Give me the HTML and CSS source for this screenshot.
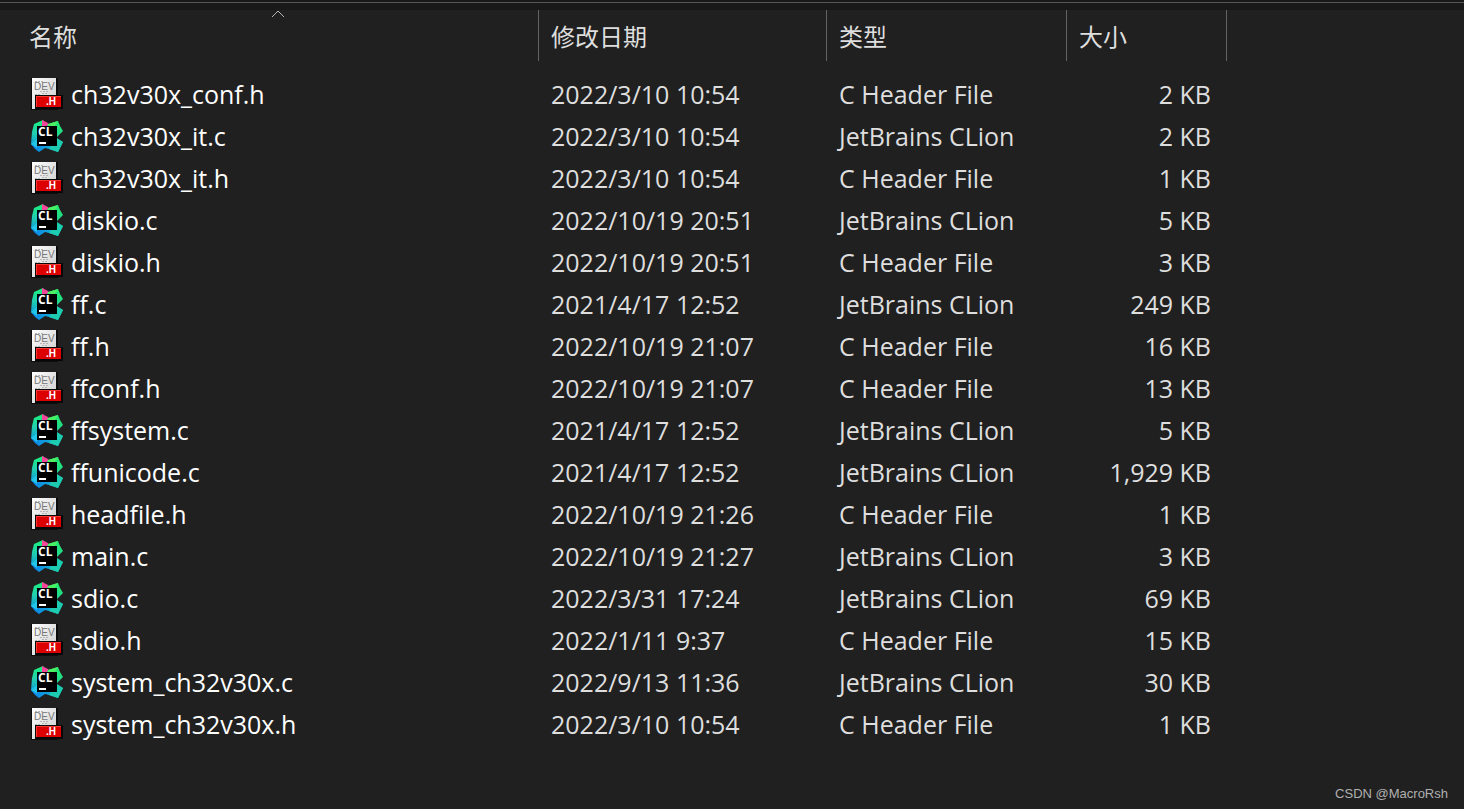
FILE: index.html
```html
<!DOCTYPE html>
<html lang="zh-CN">
<head>
<meta charset="utf-8">
<title>文件列表</title>
<link rel="stylesheet" href="styles.css">
</head>
<body>
<svg class="sprite" aria-hidden="true">
  <linearGradient id="paper" x1="0" y1="0" x2="1" y2="1">
    <stop offset="0" stop-color="#fff"/><stop offset="1" stop-color="#c9c9c9"/>
  </linearGradient>
  <linearGradient id="left" x1="0.3" y1="0" x2="0.2" y2="1">
    <stop offset="0" stop-color="#1bf07a"/><stop offset="0.45" stop-color="#22cfb0"/><stop offset="1" stop-color="#0a8be0"/>
  </linearGradient>
  <linearGradient id="right" x1="0.6" y1="0" x2="0.4" y2="1">
    <stop offset="0" stop-color="#22ee6c"/><stop offset="1" stop-color="#1fc6a4"/>
  </linearGradient>
  <linearGradient id="bottom" x1="0" y1="0" x2="1" y2="0">
    <stop offset="0" stop-color="#0a7fe6"/><stop offset="0.6" stop-color="#12a8dc"/><stop offset="1" stop-color="#1fd3a8"/>
  </linearGradient>
  <symbol id="header-file" viewBox="0 0 32 32">
    <path d="M0 0h27v32H0z" fill="#0c0c0c"/>
    <path d="M1 0h24v31H1z" fill="url(#paper)"/>
    <path d="M4 3.500h8M9 13.500h9M11 15.500h6M4 16.500h5" stroke="#b4b4b4" stroke-dasharray="2 1"/>
    <text x="3" y="12" class="icon-dev">DEV</text>
    <path d="M4 17h28v14H4z" fill="#080808"/>
    <path d="M5 18h25v11H5z" fill="#dc0000"/>
    <path d="M5 18.500h25M5.500 18v11" stroke="#f23a32"/>
    <text x="15" y="27" class="icon-h">.H</text>
  </symbol>
  <symbol id="clion-file" viewBox="0 0 32 32">
    <path d="M3 4 12 0l4 6v20H9l-4 3-5-5 1-12z" fill="url(#left)"/>
    <path d="M11 0l6 3 2 3-8 1z" fill="#f4459b"/>
    <path d="M17 4l10-3 2 5 3 5-6 6v6H16V6z" fill="url(#right)"/>
    <path d="M17 4l10-3-4 6h-6z" fill="#4cf063"/>
    <path d="M0 24l6-2 20-3 6 3-5 10-9-3-4-1-6 4-4-3z" fill="url(#bottom)"/>
    <path d="M22 23l4-5 6 4-5 10-9-3z" fill="#1ccbb0"/>
    <path d="M0 24l6-5v9z" fill="#22c5e8"/>
    <path d="M6 6h20v20H6z" fill="#000"/>
    <text x="7" y="16" class="icon-cl">CL</text>
    <path d="M8 22h7v2H8z" fill="#fff"/>
  </symbol>
</svg>

<main class="explorer">
  <table class="files">
    <colgroup>
      <col class="col-name"><col class="col-date"><col class="col-type"><col class="col-size"><col>
    </colgroup>
    <thead>
      <tr>
        <th scope="col" aria-sort="ascending"><button type="button" class="sort">名称</button><svg class="arrow" viewBox="0 0 14 8" aria-hidden="true"><path d="M1 7l6-6 6 6"/></svg></th>
        <th scope="col"><button type="button" class="sort">修改日期</button></th>
        <th scope="col"><button type="button" class="sort">类型</button></th>
        <th scope="col"><button type="button" class="sort">大小</button></th>
        <td></td>
      </tr>
    </thead>
    <tbody>
      <tr><td><div class="file"><svg class="icon"><use href="#header-file"/></svg>ch32v30x_conf.h</div></td><td>2022/3/10 10:54</td><td>C Header File</td><td>2 KB</td></tr>
      <tr><td><div class="file"><svg class="icon"><use href="#clion-file"/></svg>ch32v30x_it.c</div></td><td>2022/3/10 10:54</td><td>JetBrains CLion</td><td>2 KB</td></tr>
      <tr><td><div class="file"><svg class="icon"><use href="#header-file"/></svg>ch32v30x_it.h</div></td><td>2022/3/10 10:54</td><td>C Header File</td><td>1 KB</td></tr>
      <tr><td><div class="file"><svg class="icon"><use href="#clion-file"/></svg>diskio.c</div></td><td>2022/10/19 20:51</td><td>JetBrains CLion</td><td>5 KB</td></tr>
      <tr><td><div class="file"><svg class="icon"><use href="#header-file"/></svg>diskio.h</div></td><td>2022/10/19 20:51</td><td>C Header File</td><td>3 KB</td></tr>
      <tr><td><div class="file"><svg class="icon"><use href="#clion-file"/></svg>ff.c</div></td><td>2021/4/17 12:52</td><td>JetBrains CLion</td><td>249 KB</td></tr>
      <tr><td><div class="file"><svg class="icon"><use href="#header-file"/></svg>ff.h</div></td><td>2022/10/19 21:07</td><td>C Header File</td><td>16 KB</td></tr>
      <tr><td><div class="file"><svg class="icon"><use href="#header-file"/></svg>ffconf.h</div></td><td>2022/10/19 21:07</td><td>C Header File</td><td>13 KB</td></tr>
      <tr><td><div class="file"><svg class="icon"><use href="#clion-file"/></svg>ffsystem.c</div></td><td>2021/4/17 12:52</td><td>JetBrains CLion</td><td>5 KB</td></tr>
      <tr><td><div class="file"><svg class="icon"><use href="#clion-file"/></svg>ffunicode.c</div></td><td>2021/4/17 12:52</td><td>JetBrains CLion</td><td>1,929 KB</td></tr>
      <tr><td><div class="file"><svg class="icon"><use href="#header-file"/></svg>headfile.h</div></td><td>2022/10/19 21:26</td><td>C Header File</td><td>1 KB</td></tr>
      <tr><td><div class="file"><svg class="icon"><use href="#clion-file"/></svg>main.c</div></td><td>2022/10/19 21:27</td><td>JetBrains CLion</td><td>3 KB</td></tr>
      <tr><td><div class="file"><svg class="icon"><use href="#clion-file"/></svg>sdio.c</div></td><td>2022/3/31 17:24</td><td>JetBrains CLion</td><td>69 KB</td></tr>
      <tr><td><div class="file"><svg class="icon"><use href="#header-file"/></svg>sdio.h</div></td><td>2022/1/11 9:37</td><td>C Header File</td><td>15 KB</td></tr>
      <tr><td><div class="file"><svg class="icon"><use href="#clion-file"/></svg>system_ch32v30x.c</div></td><td>2022/9/13 11:36</td><td>JetBrains CLion</td><td>30 KB</td></tr>
      <tr><td><div class="file"><svg class="icon"><use href="#header-file"/></svg>system_ch32v30x.h</div></td><td>2022/3/10 10:54</td><td>C Header File</td><td>1 KB</td></tr>
    </tbody>
  </table>
  <footer class="credit">CSDN @MacroRsh</footer>
</main>
</body>
</html>
```

FILE: styles.css
```css
* {
  box-sizing: border-box;
}

body {
  margin: 0;
  background: #202020;
  color: #dedede;
  font-family: "Open Sans", "Noto Sans CJK SC", sans-serif;
}

.sprite {
  position: absolute;
  width: 0;
  height: 0;
}

.explorer {
  display: flex;
  flex-direction: column;
  min-height: 100vh;
}

.explorer::before {
  content: "";
  height: 10px;
  background: linear-gradient(#191919 2px, #555 2px, #555 3px, #191919 3px);
}

.files {
  width: 100%;
  table-layout: fixed;
  border-collapse: separate;
  border-spacing: 0;
  font-size: 25px;
  line-height: 42px;
}

.col-name { width: 538px; }
.col-date { width: 288px; }
.col-type { width: 240px; }
.col-size { width: 160px; }

.files th,
.files td {
  padding: 0 0 0 13px;
  white-space: nowrap;
  text-align: left;
}

.files thead th,
.files thead td {
  position: relative;
  height: 51px;
  padding-left: 12px;
  border-left: 1px solid #636363;
  vertical-align: middle;
}

.files thead th:first-child {
  padding-left: 29px;
  border-left: 0;
}

.files tbody::before {
  content: "";
  display: block;
  height: 12px;
}

.files tbody td:first-child {
  padding-left: 31px;
  color: #fff;
}

.files tbody td:nth-child(4) {
  padding-right: 15px;
  text-align: right;
}

.sort {
  display: block;
  padding: 0;
  border: 0;
  background: none;
  color: inherit;
  font-family: "Noto Sans CJK SC", sans-serif;
  font-size: 24px;
  font-weight: 400;
  line-height: 48px;
}

.arrow {
  position: absolute;
  top: 0;
  left: calc(50% + 2px);
  width: 14px;
  height: 8px;
  fill: none;
  stroke: #b8b8b8;
}

.file {
  display: flex;
  align-items: center;
  gap: 8px;
}

.icon {
  flex: none;
  width: 32px;
  height: 32px;
}

.icon-dev,
.icon-h,
.icon-cl {
  font-family: "Liberation Sans", sans-serif;
  font-weight: 700;
}

.icon-dev {
  font-size: 10px;
  font-weight: 400;
  fill: #777;
}

.icon-h {
  font-size: 10px;
  fill: #fff;
}

.icon-cl {
  font-family: "Open Sans", sans-serif;
  font-size: 12px;
  fill: #fff;
}

.credit {
  margin-top: auto;
  padding: 0 16px 5px;
  color: #b0b0b0;
  font-family: "Liberation Sans", sans-serif;
  font-size: 13px;
  line-height: 20px;
  text-align: right;
}
```
